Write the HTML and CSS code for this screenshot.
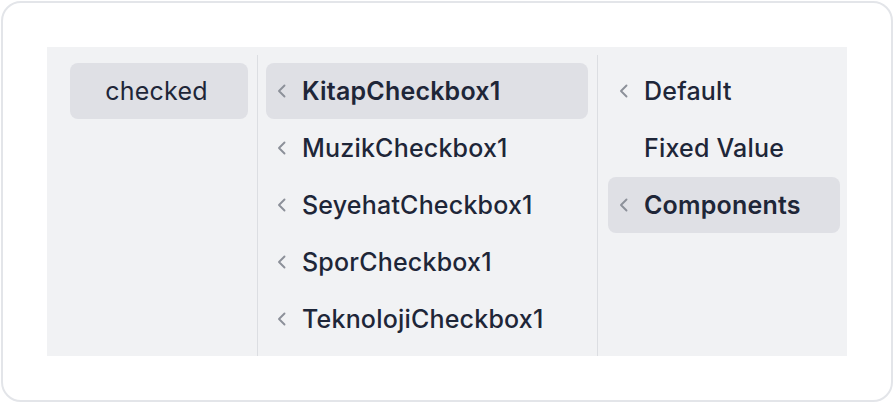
FILE: index.html
```html
<!DOCTYPE html>
<html>
<head>
<meta charset="utf-8">
<link rel="stylesheet" href="styles.css">
</head>
<body>
<div class="card">
  <div class="panel">
    <div class="col col1">
      <div class="item sel center"><span class="label reg">checked</span></div>
    </div>
    <div class="col col2">
      <div class="item sel"><span class="chev"><svg width="10" height="14" viewBox="0 0 10 14"><path d="M7.5 1.5 L2 7 L7.5 12.5" fill="none" stroke="#8c9099" stroke-width="1.9" stroke-linecap="round" stroke-linejoin="round"/></svg></span><span class="label bold">KitapCheckbox1</span></div>
      <div class="item"><span class="chev"><svg width="10" height="14" viewBox="0 0 10 14"><path d="M7.5 1.5 L2 7 L7.5 12.5" fill="none" stroke="#8c9099" stroke-width="1.9" stroke-linecap="round" stroke-linejoin="round"/></svg></span><span class="label">MuzikCheckbox1</span></div>
      <div class="item"><span class="chev"><svg width="10" height="14" viewBox="0 0 10 14"><path d="M7.5 1.5 L2 7 L7.5 12.5" fill="none" stroke="#8c9099" stroke-width="1.9" stroke-linecap="round" stroke-linejoin="round"/></svg></span><span class="label">SeyehatCheckbox1</span></div>
      <div class="item"><span class="chev"><svg width="10" height="14" viewBox="0 0 10 14"><path d="M7.5 1.5 L2 7 L7.5 12.5" fill="none" stroke="#8c9099" stroke-width="1.9" stroke-linecap="round" stroke-linejoin="round"/></svg></span><span class="label">SporCheckbox1</span></div>
      <div class="item"><span class="chev"><svg width="10" height="14" viewBox="0 0 10 14"><path d="M7.5 1.5 L2 7 L7.5 12.5" fill="none" stroke="#8c9099" stroke-width="1.9" stroke-linecap="round" stroke-linejoin="round"/></svg></span><span class="label">TeknolojiCheckbox1</span></div>
    </div>
    <div class="col col3">
      <div class="item"><span class="chev"><svg width="10" height="14" viewBox="0 0 10 14"><path d="M7.5 1.5 L2 7 L7.5 12.5" fill="none" stroke="#8c9099" stroke-width="1.9" stroke-linecap="round" stroke-linejoin="round"/></svg></span><span class="label">Default</span></div>
      <div class="item"><span class="chev"></span><span class="label">Fixed Value</span></div>
      <div class="item sel"><span class="chev"><svg width="10" height="14" viewBox="0 0 10 14"><path d="M7.5 1.5 L2 7 L7.5 12.5" fill="none" stroke="#8c9099" stroke-width="1.9" stroke-linecap="round" stroke-linejoin="round"/></svg></span><span class="label bold">Components</span></div>
    </div>
  </div>
</div>
</body>
</html>
```

FILE: styles.css
```css
html, body {
  margin: 0;
  padding: 0;
  background: #ffffff;
}
body {
  padding: 1px;
  font-family: Inter, "Noto Sans", sans-serif;
  color: #1e2638;
}
.card {
  box-sizing: border-box;
  width: 892px;
  height: 401px;
  border: 2px solid #e3e5e9;
  border-radius: 20px;
  padding: 44px 0 0 44px;
}
.panel {
  width: 800px;
  height: 309px;
  box-sizing: border-box;
  background: #f1f2f4;
  padding: 8px 0 0 15px;
  display: flex;
}
.col {
  box-sizing: border-box;
  height: 100%;
  padding-top: 8px;
  display: flex;
  flex-direction: column;
  gap: 1px;
}
.col1 {
  padding-left: 8px;
  padding-right: 9px;
  border-right: 1px solid #dcdee2;
}
.col1 .item { width: 178px; }
.col2 {
  padding-left: 8px;
  padding-right: 9px;
  border-right: 1px solid #dcdee2;
}
.col2 .item { width: 322px; }
.col3 {
  padding-left: 10px;
}
.col3 .item { width: 232px; }
.item {
  box-sizing: border-box;
  height: 56px;
  border-radius: 8px;
  display: flex;
  align-items: center;
  padding-left: 11px;
}
.item.sel { background: #dfe0e5; }
.item.center { justify-content: center; padding-left: 0; padding-right: 5px; }
.chev {
  width: 10px;
  height: 14px;
  margin-right: 15px;
  display: flex;
}
.label {
  font-size: 25px;
  font-weight: 500;
  letter-spacing: 0.2px;
}
.label.bold { font-weight: 600; }
.label.reg { font-weight: 400; }
```
